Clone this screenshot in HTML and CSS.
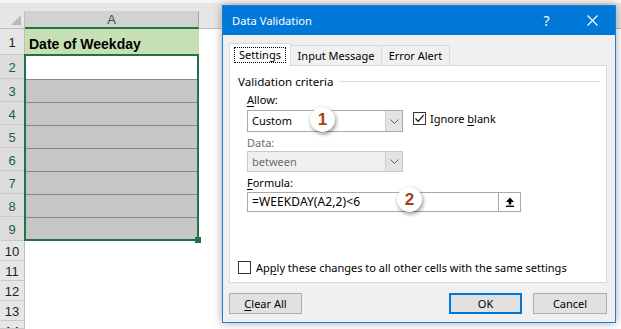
FILE: index.html
```html
<!DOCTYPE html>
<html>
	<head>
		<title>Data Validation</title>
		<meta name="viewport" content="width=device-width, initial-scale=1" />
		<link rel="stylesheet" href="styles.css">
	</head>
	<body>
		<div class="sheet">
			<div class="topband"></div>
			<div class="corner"><span class="tri"></span></div>
			<div class="colhead sel">A</div>
			<div class="colhead"></div>

			<div class="rh">1</div><div class="cell title">Date of Weekday</div><div class="rest"></div>
			<div class="rh sel">2</div><div class="cell"></div><div class="rest"></div>
			<div class="rh sel">3</div><div class="cell fill"></div><div class="rest"></div>
			<div class="rh sel">4</div><div class="cell fill"></div><div class="rest"></div>
			<div class="rh sel">5</div><div class="cell fill"></div><div class="rest"></div>
			<div class="rh sel">6</div><div class="cell fill"></div><div class="rest"></div>
			<div class="rh sel">7</div><div class="cell fill"></div><div class="rest"></div>
			<div class="rh sel">8</div><div class="cell fill"></div><div class="rest"></div>
			<div class="rh sel">9</div><div class="cell fill"></div><div class="rest"></div>
			<div class="rh">10</div><div class="cell"></div><div class="rest"></div>
			<div class="rh">11</div><div class="cell"></div><div class="rest"></div>
			<div class="rh">12</div><div class="cell"></div><div class="rest"></div>
			<div class="rh">13</div><div class="cell"></div><div class="rest"></div>
			<div class="rh last">14</div><div class="cell"></div><div class="rest"></div>

			<div class="selection"><span class="handle"></span></div>
		</div>

		<div class="dialog">
			<div class="titlebar">
				<span class="title">Data Validation</span>
				<span class="help">?</span>
				<span class="close">
					<svg width="11" height="11" viewBox="0 0 11 11"><path d="M0.5 0.5 L10.5 10.5 M10.5 0.5 L0.5 10.5" stroke="#fff" stroke-width="1.1" fill="none"/></svg>
				</span>
			</div>
			<div class="body">
				<div class="tabs">
					<span class="tab active"><span class="focus">Settings</span></span>
					<span class="tab input">Input Message</span>
					<span class="tab error">Error Alert</span>
				</div>
				<div class="panel">
					<div class="legend"><span>Validation criteria</span><span class="rule"></span></div>
					<div class="group">
						<div class="label"><u>A</u>llow:</div>
						<div class="row">
							<div class="select">
								<span class="value">Custom</span>
								<span class="drop"><svg width="9" height="5" viewBox="0 0 9 5"><path d="M0.5 0.5 L4.5 4.5 L8.5 0.5" stroke="#5a5a5a" fill="none"/></svg></span>
								<span class="badge b1">1</span>
							</div>
							<div class="check ignore">
								<span class="box"><svg width="11" height="11" viewBox="0 0 11 11"><path d="M1.5 5.5 L4.2 8.3 L9.6 2.2" stroke="#111" stroke-width="1.2" fill="none"/></svg></span>
								<span>Ignore <u>b</u>lank</span>
							</div>
						</div>
						<div class="label off">Data:</div>
						<div class="select off">
							<span class="value">between</span>
							<span class="drop"><svg width="9" height="5" viewBox="0 0 9 5"><path d="M0.5 0.5 L4.5 4.5 L8.5 0.5" stroke="#5a5a5a" fill="none"/></svg></span>
						</div>
						<div class="label"><u>F</u>ormula:</div>
						<div class="formula">
							<span class="value">=WEEKDAY(A2,2)&lt;6</span>
							<span class="pick"><svg width="10" height="10" viewBox="0 0 10 10"><path d="M5 0.5 L9 5 L6.3 5 L6.3 7.5 L3.7 7.5 L3.7 5 L1 5 Z" fill="#000"/><rect x="1" y="8.6" width="8" height="1.4" fill="#000"/></svg></span>
							<span class="badge b2">2</span>
						</div>
					</div>
					<div class="check apply">
						<span class="box"></span>
						<span>Ap<u>p</u>ly these changes to all other cells with the same settings</span>
					</div>
				</div>
				<div class="buttons">
					<span class="btn"><u>C</u>lear All</span>
					<span class="btn ok">OK</span>
					<span class="btn cancel">Cancel</span>
				</div>
			</div>
		</div>
	</body>
</html>
```

FILE: styles.css
```css
* { box-sizing: border-box; }
body {
	margin: 0;
	width: 621px;
	height: 329px;
	overflow: hidden;
	position: relative;
	background: #fff;
	font-family: "Liberation Sans", Arial, sans-serif;
}

/* spreadsheet */
.sheet {
	display: grid;
	grid-template-columns: 25px 174px 1fr;
	grid-template-rows: 11px 18px 26px 24px repeat(6, 23px) 24px repeat(4, 20px) 8px;
	position: relative;
	height: 329px;
	overflow: hidden;
}
.topband {
	grid-column: 1 / 4;
	background: #e6e6e6;
	border-top: 3px solid #f5f5f5;
}
.corner {
	position: relative;
	background: #e6e6e6;
	border-right: 1px solid #bdbdbd;
	border-bottom: 1px solid #bdbdbd;
}
.tri {
	position: absolute;
	right: 3px;
	bottom: 3px;
	border-left: 10px solid transparent;
	border-bottom: 10px solid #b9b9b9;
}
.colhead {
	background: #e6e6e6;
	border-bottom: 1px solid #bdbdbd;
	font-size: 13px;
	line-height: 17px;
	text-align: center;
	color: #444;
}
.colhead.sel {
	background: #d2d2d2;
	color: #2b5b3d;
	border-right: 1px solid #a6a6a6;
	border-bottom: 2px solid #217346;
}
.rh {
	display: flex;
	align-items: center;
	justify-content: center;
	padding-top: 2px;
	background: #e6e6e6;
	border-right: 1px solid #bdbdbd;
	border-bottom: 1px solid #c9c9c9;
	font-size: 13px;
	color: #222;
}
.rh.sel { background: #dcdcdc; color: #1f5f3a; }
.rh.last { align-items: flex-start; overflow: hidden; line-height: 15px; padding-top: 3px; }
.cell { background: #fff; }
.cell.title {
	display: flex;
	align-items: flex-end;
	padding: 0 0 3px 4px;
	background: #c6e0b4;
	font-weight: bold;
	font-size: 14px;
}
.cell.fill { background: #c6c6c6; border-top: 1px solid #878787; }
.rest { background: #fff; }
.selection {
	position: absolute;
	left: 24px;
	top: 54px;
	width: 175px;
	height: 187px;
	border: 2px solid #217346;
}
.handle {
	position: absolute;
	right: -4px;
	bottom: -4px;
	width: 6px;
	height: 6px;
	background: #217346;
}

/* dialog window */
.dialog {
	position: absolute;
	left: 222px;
	top: 5px;
	width: 394px;
	height: 318px;
	display: flex;
	flex-direction: column;
	border: 1px solid #1b7fd5;
	background: #f0f0f0;
	box-shadow: 0 0 9px rgba(0, 0, 0, 0.35);
	font-family: "Noto Sans", "Open Sans", sans-serif;
	font-size: 11px;
	color: #000;
}
.titlebar {
	display: flex;
	align-items: center;
	height: 29px;
	background: #0078d7;
	color: #fff;
}
.title { flex: 1; padding-left: 9px; font-size: 11.2px; }
.help { width: 45px; text-align: center; font-size: 14px; }
.close { width: 46px; display: flex; justify-content: center; }
.body { padding: 8px 0 0 6px; }
u { text-underline-offset: 2px; }

.tabs { display: flex; align-items: flex-end; height: 22px; }
.tab {
	display: flex;
	align-items: center;
	justify-content: center;
	height: 20px;
	margin-left: -1px;
	border: 1px solid #d9d9d9;
	border-bottom: none;
	background: #f0f0f0;
}
.tab.active {
	position: relative;
	z-index: 1;
	width: 62px;
	height: 23px;
	margin: 0 0 -1px 0;
	background: #fff;
}
.tab.input { width: 92px; }
.tab.error { width: 69px; }
.focus { border: 1px dotted #000; padding: 0 4px; line-height: 14px; }

.panel {
	display: flex;
	flex-direction: column;
	width: 378px;
	height: 218px;
	padding: 7px 6px 7px 8px;
	border: 1px solid #d9d9d9;
	background: #fff;
}
.legend { display: flex; align-items: center; gap: 5px; height: 16px; font-size: 11.6px; }
.rule { flex: 1; border-top: 1px solid #dcdcdc; }
.group { padding-left: 9px; }
.label { height: 16px; line-height: 16px; margin-top: 3px; }
.label.off { color: #6d6d6d; }
.row { display: flex; align-items: center; margin-top: 2px; }
.select {
	position: relative;
	display: flex;
	width: 156px;
	height: 22px;
	border: 1px solid #a9a9a9;
	background: #fff;
}
.select.off { height: 21px; border-color: #c9c9c9; background: #f0f0f0; color: #6d6d6d; }
.value { flex: 1; padding-left: 4px; line-height: 19px; }
.drop {
	display: flex;
	align-items: center;
	justify-content: center;
	width: 17px;
	background: #e3e3e3;
	border-left: 1px solid #cfcfcf;
}
.check { display: flex; align-items: center; gap: 4px; }
.ignore { margin-left: 10px; padding-bottom: 5px; }
.box {
	display: flex;
	align-items: center;
	justify-content: center;
	width: 13px;
	height: 13px;
	border: 1px solid #333;
	background: #fff;
}
.formula {
	position: relative;
	display: flex;
	width: 274px;
	height: 20px;
	margin-top: 1px;
	border: 1px solid #a9a9a9;
	background: #fff;
}
.formula .value { line-height: 18px; font-size: 12px; letter-spacing: 0.1px; }
.pick {
	display: flex;
	align-items: center;
	justify-content: center;
	width: 22px;
	border-left: 1px solid #a9a9a9;
}
.apply { margin-top: auto; gap: 5px; }
.badge {
	position: absolute;
	display: flex;
	align-items: center;
	justify-content: center;
	width: 25px;
	height: 25px;
	border-radius: 50%;
	background: #fff;
	box-shadow: 1px 2px 4px rgba(0, 0, 0, 0.45);
	font-family: "Liberation Sans", Arial, sans-serif;
	font-weight: bold;
	font-size: 17px;
	color: #a5430f;
}
.b1 { left: 62px; top: -4px; }
.b2 { left: 149px; top: -6px; }

.buttons { display: flex; height: 21px; margin-top: 10px; padding-right: 8px; }
.btn {
	display: flex;
	align-items: center;
	justify-content: center;
	width: 73px;
	border: 1px solid #adadad;
	background: #e1e1e1;
}
.btn.ok { margin-left: auto; border: 2px solid #0078d7; }
.btn.cancel { width: 74px; margin-left: 11px; }
```
